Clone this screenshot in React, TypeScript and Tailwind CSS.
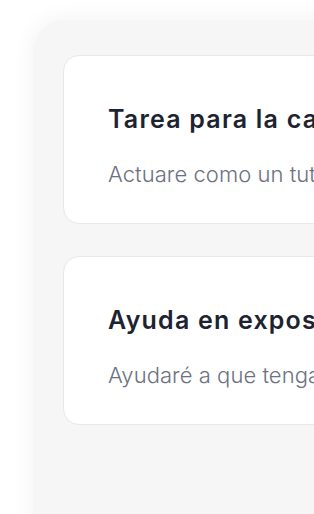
import React from "react";

const cards = [
  { title: "Tarea para la casa", desc: "Actuare como un tutor para ayudarte con tus tareas" },
  { title: "Ayuda en exposiciones", desc: "Ayudaré a que tengas una gran exposición" },
];

export default function App() {
  return (
    <div
      className="w-[314px] h-[514px] overflow-hidden bg-white"
      style={{ fontFamily: "Inter, 'Noto Sans', sans-serif" }}
    >
      <div className="ml-[33px] mt-[20px] w-[420px] h-[560px] rounded-[32px] bg-[#f6f6f7] shadow-[0_0_18px_6px_rgba(0,0,0,0.035)] pl-[30px] pt-[35px] flex flex-col gap-[32px]">
        {cards.map((c) => (
          <div
            key={c.title}
            className="w-[400px] h-[169px] rounded-[16px] border border-[#e7e7ef] bg-white pl-[44px] pt-[49px]"
          >
            <div className="text-[25px] leading-[28px] font-semibold text-[#1d2330] whitespace-nowrap tracking-[1.2px]">
              {c.title}
            </div>
            <div className="mt-[28px] text-[22px] leading-[26px] font-light text-[#6b7180] whitespace-nowrap tracking-[0.05px]">
              {c.desc}
            </div>
          </div>
        ))}
      </div>
    </div>
  );
}
